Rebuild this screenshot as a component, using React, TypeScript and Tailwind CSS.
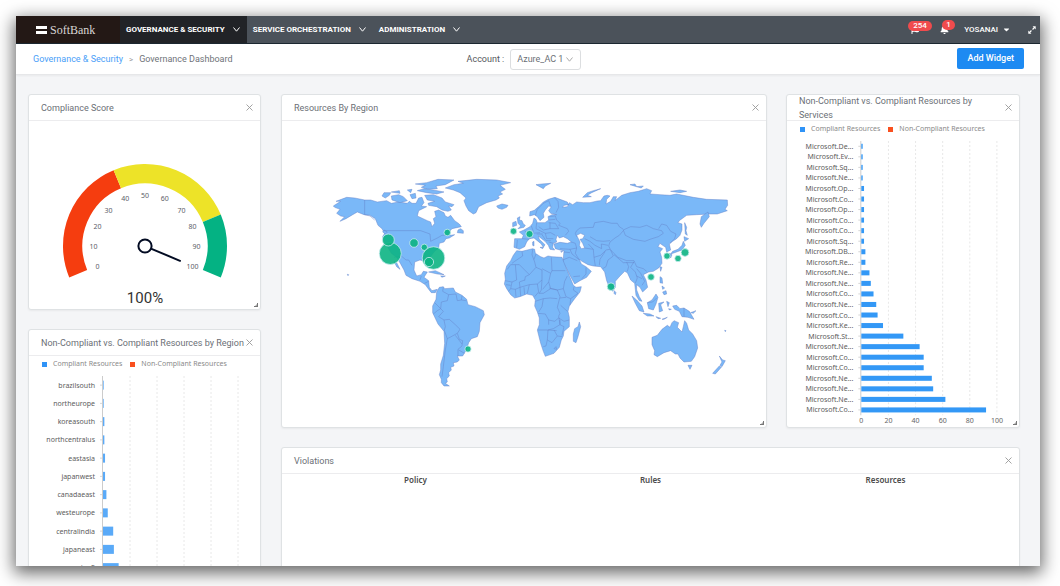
import type { ReactNode } from "react";
import { FaBell, FaCaretDown, FaFlag } from "react-icons/fa";

type Bar = { label: string; value: number };

const MENU = ["GOVERNANCE & SECURITY", "SERVICE ORCHESTRATION", "ADMINISTRATION"];

const REGIONS: Bar[] = [
  { label: "brazilsouth", value: 1 },
  { label: "northeurope", value: 1 },
  { label: "koreasouth", value: 2 },
  { label: "northcentralus", value: 2 },
  { label: "eastasia", value: 3 },
  { label: "japanwest", value: 3 },
  { label: "canadaeast", value: 5 },
  { label: "westeurope", value: 7 },
  { label: "centralindia", value: 15 },
  { label: "japaneast", value: 16 },
  { label: "eastus2", value: 23 },
];

const SERVICES: Bar[] = [
  { label: "Microsoft.De...", value: 1 },
  { label: "Microsoft.Ev...", value: 1 },
  { label: "Microsoft.Sq...", value: 1 },
  { label: "Microsoft.Ne...", value: 1 },
  { label: "Microsoft.Op...", value: 2 },
  { label: "Microsoft.Co...", value: 2 },
  { label: "Microsoft.Op...", value: 2 },
  { label: "Microsoft.Co...", value: 2 },
  { label: "Microsoft.Co...", value: 2 },
  { label: "Microsoft.Sq...", value: 2 },
  { label: "Microsoft.DB...", value: 3 },
  { label: "Microsoft.Re...", value: 3 },
  { label: "Microsoft.Ne...", value: 6 },
  { label: "Microsoft.Ne...", value: 7 },
  { label: "Microsoft.Co...", value: 9 },
  { label: "Microsoft.Ne...", value: 11 },
  { label: "Microsoft.Co...", value: 12 },
  { label: "Microsoft.Ke...", value: 16 },
  { label: "Microsoft.St...", value: 31 },
  { label: "Microsoft.Ne...", value: 43 },
  { label: "Microsoft.Co...", value: 46 },
  { label: "Microsoft.Co...", value: 46 },
  { label: "Microsoft.Ne...", value: 52 },
  { label: "Microsoft.Ne...", value: 53 },
  { label: "Microsoft.Ne...", value: 62 },
  { label: "Microsoft.Co...", value: 92 },
];

// x, y, radius
const BUBBLES = [
  [390.3, 253.5, 11],
  [388.3, 240, 6],
  [414, 243, 4.3],
  [424.3, 247.3, 3.2],
  [433.5, 258, 11.3],
  [429, 262, 4.6],
  [447.3, 232.5, 3.3],
  [513.5, 231.2, 3.2],
  [529.5, 234, 3.6],
  [468, 349, 3.1],
  [611, 286.7, 3.8],
  [651, 277, 3.3],
  [667, 256, 3.2],
  [678, 258.5, 3.2],
  [685, 252.5, 3.9],
];

const NORTH_AMERICA = [
  "M40,108 L62,94 L48,94 L80,82 L104,84 L134,90 L152,90 L172,96 L200,92 L214,100 L236,96 L262,100 L268,94 L276,100 L288,100 L296,84 L306,82 L312,98 L304,108 L320,110 L296,122 L292,138 L322,152 L332,156 L336,170 L344,160 L340,146 L348,140 L344,124 L356,120 L372,128 L376,138 L384,142 L392,136 L404,152 L418,162 L424,170 L396,176 L384,190 L392,196 L404,194 L388,204 L378,206 L372,216 L358,220 L356,234 L344,244 L330,262 L336,284 L330,292 L322,276 L300,270 L284,276 L282,300 L290,318 L304,314 L310,304 L322,306 L312,322 L326,332 L328,352 L336,362 L352,358 L346,368 L334,368 L326,358 L316,344 L300,334 L276,326 L258,316 L252,300 L242,282 L230,262 L214,250 L194,216 L188,200 L194,190 L186,176 L174,166 L166,146 L150,136 L132,134 L112,126 L98,134 L78,146 L60,154 L74,140 L62,138 L50,130 L60,118 L44,112Z",
  "M222,274 L230,278 L240,298 L230,290Z",
  "M192,180 L202,186 L196,192 L188,186Z",
  "M414,180 L422,176 L430,182 L430,190 L412,188Z",
  "M314,76 L340,74 L366,84 L376,96 L402,104 L396,110 L386,108 L394,120 L384,124 L366,120 L350,110 L326,106 L324,100 L344,94 L322,90Z",
  "M214,78 L236,74 L250,80 L262,92 L240,98 L216,90Z",
  "M186,78 L192,68 L212,68 L208,76 L196,84Z",
  "M286,42 L320,38 L354,28 L402,30 L376,44 L348,48 L352,56 L322,58 L304,52 L316,46Z",
  "M292,62 L312,56 L340,60 L372,66 L350,72 L320,68Z",
  "M214,66 L238,62 L240,70Z",
  "M262,60 L276,58 L272,68Z",
  "M270,74 L286,70 L288,84 L276,86Z",
  "M376,54 L402,44 L430,40 L414,34 L470,28 L530,30 L572,38 L540,46 L556,58 L540,66 L548,72 L534,78 L538,84 L528,90 L500,98 L476,110 L468,128 L460,132 L446,122 L438,108 L432,92 L438,84 L420,68 L400,60Z",
  "M530,108 L546,102 L564,106 L560,112 L546,118 L534,114Z",
  "M326,306 L346,302 L372,314 L352,312Z",
  "M362,318 L376,318 L366,322Z",
  "M82,313 L86,314 L84,317Z",
];

const NORTH_AMERICA_BORDERS =
  "M134,90 V134 L150,138 L164,150 M192,182 H302 L330,192 L332,214 L352,204 L366,196 L380,196 M222,262 L244,258 L258,270 L266,270 L276,286 M300,330 L304,318 M314,340 L326,334";

const SOUTH_AMERICA = [
  "M118,52 L130,50 L134,56 L160,54 L166,66 L186,76 L200,88 L204,104 L226,110 L250,122 L253,134 L240,158 L238,184 L232,200 L214,206 L206,218 L200,238 L188,258 L172,258 L178,270 L172,276 L160,278 L162,288 L152,292 L154,300 L146,308 L148,318 L140,326 L142,336 L136,340 L148,348 L132,348 L124,338 L124,328 L118,314 L122,300 L122,282 L130,256 L134,220 L132,184 L114,162 L98,128 L98,108 L108,88 L110,66Z",
];

const SOUTH_AMERICA_BORDERS =
  "M130,52 L128,64 L146,74 L142,92 L124,96 L122,116 M146,74 L168,72 L172,92 L184,90 L198,92 M186,78 L184,90 M104,98 L122,116 L112,122 L100,132 M122,116 L130,124 L116,140 L132,150 L136,170 L132,184 M132,150 L148,148 L166,164 L180,178 L172,190 L150,202 L142,206 L134,184 M142,206 L136,240 L130,290 L126,320 M172,190 L178,208 L188,212 L186,228 L174,238 L174,258 M166,196 L186,222 M176,240 L194,250";

const EURASIA = [
  "M149,138 L150,125 L163,121 L178,108 L190,96 L205,88 L225,82 L240,88 L262,96 L266,104 L252,106 L248,112 L262,110 L268,98 L278,104 L290,96 L310,98 L330,98 L352,93 L362,92 L372,78 L382,76 L390,78 L380,88 L378,102 L392,94 L400,80 L410,80 L405,92 L425,76 L450,68 L475,64 L500,56 L515,62 L510,72 L540,74 L570,76 L590,72 L640,82 L680,88 L742,90 L743,106 L735,118 L742,122 L712,132 L690,132 L650,134 L620,136 L598,152 L594,158 L606,162 L606,180 L600,196 L590,206 L578,214 L568,222 L572,240 L560,246 L557,232 L548,226 L540,220 L534,230 L548,236 L540,246 L545,262 L546,280 L536,294 L520,304 L506,306 L490,314 L498,330 L503,352 L488,366 L480,352 L470,344 L470,360 L478,380 L486,394 L478,392 L468,376 L466,358 L464,340 L452,330 L442,308 L434,304 L420,318 L406,334 L406,352 L398,364 L388,352 L380,332 L374,306 L362,290 L340,288 L324,284 L306,274 L298,268 L304,282 L318,290 L334,304 L320,322 L300,332 L284,342 L272,320 L258,292 L248,278 L250,264 L252,242 L240,240 L226,236 L222,222 L240,217 L262,220 L274,216 L262,206 L250,200 L238,204 L232,196 L228,208 L230,216 L220,220 L218,232 L224,240 L210,238 L205,226 L195,214 L185,206 L175,198 L178,208 L195,224 L190,232 L184,222 L172,212 L162,204 L148,206 L140,216 L134,230 L118,238 L102,232 L104,206 L126,206 L130,196 L118,186 L132,180 L150,170 L158,160 L162,144 L168,148 L172,158 L195,158 L206,150 L204,140 L216,134 L230,134 L212,130 L206,122 L214,110 L206,108 L196,120 L190,130 L192,142 L180,152 L172,140 L163,134Z",
  "M664,140 L684,126 L688,140 L672,160 L664,172 L660,162Z",
  "M112,144 L120,140 L118,150 L126,152 L130,162 L136,166 L132,172 L114,176 L122,168 L114,160Z",
  "M98,158 L108,154 L110,166 L98,170Z",
  "M168,44 L185,42 L212,40 L196,48 L190,56Z",
  "M308,82 L322,68 L340,62 L362,56 L335,68 L322,76 L334,80Z",
  "M450,44 L465,42 L470,50Z",
  "M470,50 L490,48 L484,54Z",
  "M572,64 L600,60 L620,64 L600,68Z",
  "M614,158 L620,172 L618,182 L622,196 L616,192Z",
  "M612,200 L626,206 L614,214Z",
  "M610,214 L616,226 L606,240 L584,248 L572,252 L578,244 L594,238 L606,226Z",
  "M568,250 L576,254 L572,264Z",
  "M540,290 L546,292 L542,304Z",
  "M180,232 L190,232 L188,236Z",
  "M158,216 L162,214 L162,228 L158,226Z",
  "M242,245 L248,243 L245,247Z",
  "M403,362 L408,368 L406,374 L402,370Z",
];

const CASPIAN = "M290,196 L302,190 L314,196 L308,206 L300,208 L308,220 L314,234 L304,236 L298,226 L300,216Z";

const EURASIA_BORDERS =
  "M290,182 L300,174 L340,172 L344,158 L370,154 L395,160 L412,160 L418,170 L430,178 M430,180 L452,170 L480,172 L500,166 L520,176 L545,182 L550,190 L535,200 L510,208 L495,214 L460,208 L436,196Z M536,176 L545,162 L560,166 L572,184 L588,192 L584,206 L570,220 M430,182 L418,196 L405,204 L390,216 L386,228 L392,240 L404,252 L414,262 L440,272 L462,272 L470,290 L490,296 L500,304 M392,240 L400,258 L384,270 L378,290 L368,296 M402,254 L430,278 L462,278 M440,276 L446,290 L442,304 M462,275 L452,292 L466,306 L472,324 L466,340 M470,296 L482,310 L494,334 L486,346 M470,318 L486,326 M290,234 L286,250 L298,270 M314,234 L340,238 L342,262 L346,288 M342,262 L362,256 L378,240 L390,238 M376,244 L360,268 L358,286 M290,200 L286,190 L290,182 M314,206 L330,214 L345,226 L365,236 M330,200 L350,212 L370,214 L390,212 M340,238 L325,222 M365,236 L364,222 L384,226 M274,216 L286,220 L290,234 L270,238 L240,236 M270,238 L276,252 L296,268 M252,246 L270,248 M248,270 L268,262 L292,272 M306,326 L318,312 L318,292 M280,320 L300,318 M166,136 L172,118 L190,100 L206,92 L212,108 M224,84 L234,94 L236,112 L228,128 M208,140 L226,138 L230,150 L240,160 L236,166 L262,176 L266,184 L256,196 M206,150 L226,148 M210,158 L210,176 L190,180 M170,158 L168,176 L180,182 M154,168 L160,184 L156,190 L180,188 M180,182 L196,190 L212,188 L226,196 M196,190 L200,206 L220,206 M186,194 L198,212 L212,212 M210,176 L236,176 L226,160 L206,158 M112,210 L110,234 M134,182 L150,196 L150,206 M126,206 L148,208 M206,216 L220,220 M176,170 L190,180 M170,192 L188,192";

const AFRICA = [
  "M110,62 L126,64 L158,56 L164,58 L166,70 L182,80 L192,84 L204,78 L216,80 L246,82 L252,98 L260,118 L270,142 L280,166 L288,172 L304,170 L300,186 L284,206 L268,228 L264,244 L268,262 L268,290 L252,304 L250,318 L244,330 L238,352 L222,370 L196,379 L190,364 L182,340 L172,300 L178,284 L178,264 L172,246 L164,228 L166,210 L158,196 L140,192 L120,200 L104,204 L92,194 L80,176 L73,162 L76,148 L74,130 L80,108 L92,92 L100,76Z",
  "M298,276 L302,290 L294,320 L288,338 L280,334 L280,312 L284,296 L294,290Z",
];

const AFRICA_BORDERS =
  "M126,64 L128,78 L104,94 L96,100 M82,118 L92,104 L106,104 L118,104 L134,120 L148,134 M106,104 L110,150 L96,156 L76,152 M158,58 L156,74 L164,96 L168,112 L148,134 L136,140 L134,152 M168,72 L162,88 M168,112 L186,120 L186,150 L172,162 L148,164 M186,116 L212,130 L216,122 L256,122 M214,82 L216,122 M148,164 L142,190 M172,162 L176,186 L164,200 M186,150 L184,180 L178,190 M212,130 L206,156 L188,178 M206,156 L212,176 L190,190 L176,190 M212,176 L232,180 L250,176 L254,154 L262,138 M232,180 L208,174 M250,176 L258,200 L272,206 L294,190 L280,180 L282,170 M272,206 L270,226 M232,180 L240,200 L236,216 L232,232 L240,250 L236,258 M240,204 L258,202 M242,226 L262,244 M166,214 L190,206 L210,204 L232,206 M190,206 L186,230 L176,246 M174,250 L196,252 L206,270 L206,284 M174,300 L204,300 L230,302 M206,270 L224,274 L236,264 L252,274 L268,270 M236,258 L240,284 L220,296 L204,300 M240,284 L240,270 M204,300 L202,330 L198,348 L190,350 M202,330 L216,338 L232,318 L222,300 M232,318 L246,320 M240,284 L252,290 L246,316 M96,156 L92,176 L106,178 L108,200 M92,176 L86,184 M106,178 L120,172 L122,198 M132,172 L134,194 M120,172 L134,168 L148,164 M120,172 L118,156 L134,150 M78,164 L92,166 M222,356 L228,350 L230,358Z";

const OCEANIA = [
  "M276,262 L292,256 L306,238 L322,226 L330,232 L336,218 L342,212 L356,218 L352,232 L366,246 L370,230 L374,212 L380,220 L386,240 L398,252 L410,272 L413,294 L404,320 L394,334 L372,336 L360,324 L354,312 L346,312 L332,302 L312,308 L292,320 L282,314 L284,302 L276,284Z",
  "M384,346 L396,346 L390,358Z",
  "M478,318 L488,330 L496,332 L486,350 L480,346 L486,336Z",
  "M478,348 L484,352 L466,372 L458,370Z",
  "M338,168 L350,166 L360,176 L372,174 L388,184 L402,208 L384,202 L366,200 L358,184 L344,178Z",
  "M392,188 L408,182 L400,190Z",
  "M262,158 L276,150 L288,132 L294,142 L288,162 L280,180 L266,176Z",
  "M216,138 L230,150 L246,168 L252,186 L238,182 L226,160Z",
  "M250,190 L270,192 L282,198 L262,198Z",
  "M288,200 L302,205 L294,206Z",
  "M306,208 L322,202 L312,208Z",
  "M296,160 L312,156 L302,164 L308,182 L298,186Z",
  "M320,154 L328,158 L324,170Z",
  "M300,80 L306,84 L308,100 L300,98Z",
  "M308,126 L318,122 L320,132 L312,134Z",
  "M306,108 L314,114 L308,118Z",
  "M326,176 L334,178 L328,180Z",
  "M494,241 L498,242 L496,245Z",
];

function Chevron() {
  return (
    <svg viewBox="0 0 7 5" className="h-[5px] w-[7px]" aria-hidden="true">
      <path d="M0.5,0.5 L3.5,4.2 L6.5,0.5" fill="none" stroke="currentColor" strokeWidth="1" />
    </svg>
  );
}

function Landmass({ x, y, shapes, borders }: { x: number; y: number; shapes: string[]; borders: string }) {
  return (
    <g transform={`translate(${x} ${y}) scale(0.3333)`}>
      {shapes.map((d) => (
        <path key={d} d={d} fill="#7ab8f8" />
      ))}
      <path d={borders} fill="none" />
    </g>
  );
}

function WorldMap() {
  return (
    <svg viewBox="282 121 484 306" className="block w-full" role="img" aria-label="Resources By Region">
      <g stroke="#6480c8" strokeWidth="1.6" strokeLinejoin="round" strokeOpacity="0.85">
        <Landmass x={320} y={170} shapes={NORTH_AMERICA} borders={NORTH_AMERICA_BORDERS} />
        <Landmass x={400} y={270} shapes={SOUTH_AMERICA} borders={SOUTH_AMERICA_BORDERS} />
        <Landmass x={480} y={170} shapes={EURASIA} borders={EURASIA_BORDERS} />
        <path d={CASPIAN} transform="translate(480 170) scale(0.3333)" fill="#fff" />
        <Landmass x={480} y={230} shapes={AFRICA} borders={AFRICA_BORDERS} />
        <Landmass x={560} y={250} shapes={OCEANIA} borders="M372,174 V200 M262,158 L278,156 L290,144" />
      </g>
      {BUBBLES.map(([cx, cy, r]) => (
        <circle key={`${cx}-${cy}`} cx={cx} cy={cy} r={r} fill="#0cb483" fillOpacity="0.9" stroke="#c9ecf0" strokeWidth="0.8" />
      ))}
    </svg>
  );
}

const polar = (value: number, r: number) => {
  const a = ((202.5 - value * 2.25) * Math.PI) / 180;
  return [116 + r * Math.cos(a), 125 - r * Math.sin(a)];
};

const arc = (from: number, to: number) => {
  const [x1, y1] = polar(from, 72.3);
  const [x2, y2] = polar(to, 72.3);
  return `M${x1},${y1} A72.3,72.3 0 0 1 ${x2},${y2}`;
};

function Gauge() {
  const ticks = [0, 10, 20, 30, 40, 50, 60, 70, 80, 90, 100];
  return (
    <svg viewBox="0 0 231 188" className="block w-full font-['Noto_Sans',sans-serif]" role="img" aria-label="Compliance Score">
      <g fill="none" strokeWidth="19.4">
        <path d={arc(0, 40)} stroke="#f53d0f" />
        <path d={arc(40, 80)} stroke="#ede328" />
        <path d={arc(80, 100)} stroke="#04b283" />
      </g>
      {ticks.map((t) => {
        const [x, y] = polar(t, 51.5);
        return (
          <text key={t} x={x} y={y + 3} textAnchor="middle" fontSize="7" fill="#5c6068">
            {t}
          </text>
        );
      })}
      <circle cx="116" cy="125" r="6.6" fill="none" stroke="#020b22" strokeWidth="2" />
      <path d="M122.5,127.8 L151,139.8" stroke="#020b22" strokeWidth="2" strokeLinecap="round" />
      <text x="116" y="182" textAnchor="middle" fontSize="15" fill="#333" fontFamily="Roboto, sans-serif">
        100%
      </text>
    </svg>
  );
}

type ChartProps = {
  name: string;
  data: Bar[];
  step: number;
  barHeight: number;
  unit: number;
  color: string;
  showScale?: boolean;
};

function BarChart({ name, data, step, barHeight, unit, color, showScale }: ChartProps) {
  const left = 74;
  const bottom = 4 + data.length * step;
  return (
    <svg
      viewBox={`0 0 231 ${Math.round(bottom + 12)}`}
      className="block w-full font-['Noto_Sans',sans-serif]"
      role="img"
      aria-label={name}
    >
      {[1, 2, 3, 4, 5].map((i) => (
        <path key={i} d={`M${left + i * 27},4 V${bottom}`} stroke="#e8e8e8" strokeWidth="1" strokeDasharray="2 2" />
      ))}
      <path d={`M${left - 0.5},4 V${bottom}`} stroke="#ccc" strokeWidth="1" />
      {data.map((bar, i) => {
        const y = 4 + step * (i + 0.5);
        return (
          <g key={i}>
            <path d={`M${left - 3},${y} H${left}`} stroke="#ccc" strokeWidth="0.8" />
            <rect x={left} y={y - barHeight / 2} width={bar.value * unit} height={barHeight} fill={color} />
            <text x={left - 8} y={y + 2.5} textAnchor="end" fontSize="7" fill="#5c5c5c">
              {bar.label}
            </text>
          </g>
        );
      })}
      {showScale &&
        [0, 20, 40, 60, 80, 100].map((v, i) => (
          <text key={v} x={left + i * 27} y={bottom + 8} textAnchor="middle" fontSize="7" fill="#666">
            {v}
          </text>
        ))}
    </svg>
  );
}

function Legend() {
  return (
    <ul className="flex h-4 items-center gap-2 pl-[13px] font-['Noto_Sans',sans-serif] text-[7px] whitespace-nowrap text-[#8a8a8a]">
      <li className="flex items-center gap-[6px]">
        <span className="size-[5px] bg-[#2f93f7]" />
        Compliant Resources
      </li>
      <li className="flex items-center gap-[6px]">
        <span className="size-[5px] bg-[#f9501f]" />
        Non-Compliant Resources
      </li>
    </ul>
  );
}

function Card({ title, children, resizable }: { title: string; children: ReactNode; resizable?: boolean }) {
  return (
    <section className="relative flex flex-col rounded-[3px] border border-[#dfe2e4] bg-white shadow-xs">
      <header className="flex h-[26px] shrink-0 items-center justify-between border-b border-[#ececee] pr-[7px] pl-3">
        <h2 className="min-w-0 flex-1 text-[9px] leading-[14px] text-[#6b6f76]">{title}</h2>
        <button type="button" aria-label={`Close ${title}`} className="shrink-0 text-[#999]">
          <svg viewBox="0 0 7 7" className="size-[7px]" aria-hidden="true">
            <path d="M0.5,0.5 L6.5,6.5 M6.5,0.5 L0.5,6.5" stroke="currentColor" strokeWidth="0.9" />
          </svg>
        </button>
      </header>
      {children}
      {resizable && (
        <svg viewBox="0 0 4 4" className="absolute right-[2px] bottom-[2px] size-1" aria-hidden="true">
          <path d="M4,0 V4 H0 V3 H3 V0Z" fill="#777" />
          <path d="M1,3 L3,1 V3Z" fill="#aaa" />
        </svg>
      )}
    </section>
  );
}

function TopBar() {
  return (
    <header className="flex h-7 shrink-0 items-stretch border-b border-[#1b2730] bg-[#4b525a] text-white">
      <a href="#" className="flex w-[104px] items-center gap-[3px] bg-[#231815] pl-5">
        <svg viewBox="0 0 11 8" className="h-2 w-[11px]" aria-hidden="true">
          <path d="M0,0 H11 V3 H0Z M0,5 H11 V8 H0Z" fill="#fff" />
        </svg>
        <span className="font-['Liberation_Serif',serif] text-[12px] leading-none text-[#d8d5d4]">SoftBank</span>
      </a>
      <nav className="flex items-stretch text-[8px] font-bold">
        {MENU.map((item, i) => (
          <button
            key={item}
            type="button"
            className={`flex items-center gap-2 pr-[7px] pl-[6px] whitespace-nowrap ${i === 0 ? "bg-[#212327]" : ""}`}
          >
            {item}
            <Chevron />
          </button>
        ))}
      </nav>
      <div className="ml-auto flex items-center pr-1 text-[8px] font-medium">
        <button type="button" aria-label="Flags, 254" className="relative mr-[21px]">
          <FaFlag size={8} />
          <span className="absolute -top-[5px] -left-[3px] rounded-full bg-[#f04b4d] px-[5px] text-[8px] leading-[10px]">254</span>
        </button>
        <button type="button" aria-label="Notifications, 1" className="relative mr-[15px]">
          <FaBell size={9} />
          <span className="absolute -top-[5px] left-[2px] rounded-full bg-[#f04b4d] px-1 text-[8px] leading-[10px]">1</span>
        </button>
        <button type="button" className="mr-[17px] flex items-center gap-1">
          YOSANAI
          <FaCaretDown size={9} />
        </button>
        <button type="button" aria-label="Full screen">
          <svg viewBox="0 0 8 8" className="size-2" aria-hidden="true">
            <path d="M4.6,0.3 H7.7 V3.4 L6.6,2.3 L5,3.9 L4.1,3 L5.7,1.4Z M3.4,7.7 H0.3 V4.6 L1.4,5.7 L3,4.1 L3.9,5 L2.3,6.6Z" fill="#fff" />
          </svg>
        </button>
      </div>
    </header>
  );
}

function SubBar() {
  return (
    <div className="relative flex h-[31px] shrink-0 items-center border-b border-[#e6e7e9] bg-white pt-px text-[9px] shadow-xs">
      <nav aria-label="Breadcrumb" className="flex w-[44%] items-center gap-[6px] pt-px pl-[17px] whitespace-nowrap">
        <a href="#" className="text-[#4aa0f8]">
          Governance &amp; Security
        </a>
        <span className="text-[8px] text-[#999]">&gt;</span>
        <span className="text-[#6f7379]">Governance Dashboard</span>
      </nav>
      <label htmlFor="account" className="mr-[6px] text-[#55585d]">
        Account :
      </label>
      <div className="relative">
        <select
          id="account"
          className="block h-[21px] w-[71px] appearance-none rounded-[3px] border border-[#dcdee0] bg-white pl-[6px] text-[9px] text-[#6b6f76]"
        >
          <option>Azure_AC 1</option>
        </select>
        <span className="pointer-events-none absolute inset-y-0 right-[8px] flex items-center text-[#aaa]">
          <Chevron />
        </span>
      </div>
      <button type="button" className="mr-4 mb-[2px] ml-auto h-[21px] rounded-[2px] bg-[#1d8af2] px-[10px] text-[9px] font-medium text-white">
        Add Widget
      </button>
    </div>
  );
}

export default function App() {
  return (
    <div className="h-screen bg-white pt-4 pr-5 pb-5 pl-4 font-[Roboto,sans-serif]">
      <div className="flex h-full flex-col overflow-hidden bg-[#f4f5f7] shadow-[0_5px_16px_2px_rgba(0,0,0,0.6)]">
        <TopBar />
        <SubBar />
        <main className="grid grow grid-cols-[233fr_739fr] items-start gap-x-5 pt-[19px] pr-5 pl-3">
          <div className="flex flex-col gap-[19px]">
            <Card title="Compliance Score" resizable>
              <Gauge />
            </Card>
            <Card title="Non-Compliant vs. Compliant Resources by Region">
              <Legend />
              <BarChart
                name="Resources by Region"
                data={REGIONS}
                step={18.25}
                barHeight={9}
                unit={0.68}
                color="#5aaaf8"
              />
            </Card>
          </div>
          <div className="grid grid-cols-[486fr_234fr] gap-x-[19px] gap-y-[19px]">
            <Card title="Resources By Region" resizable>
              <WorldMap />
            </Card>
            <Card title="Non-Compliant vs. Compliant Resources by Services" resizable>
              <Legend />
              <BarChart
                name="Resources by Services"
                data={SERVICES}
                step={10.5}
                barHeight={5}
                unit={1.35}
                color="#3398f6"
                showScale
              />
            </Card>
            <div className="col-span-2">
              <Card title="Violations">
                <div className="px-4 pb-48">
                  <table className="w-full table-fixed font-['Noto_Sans',sans-serif] text-[8px] leading-3 text-[#4c4c4c]">
                    <thead>
                      <tr>
                        <th scope="col" className="font-semibold">Policy</th>
                        <th scope="col" className="font-semibold">Rules</th>
                        <th scope="col" className="font-semibold">Resources</th>
                      </tr>
                    </thead>
                  </table>
                </div>
              </Card>
            </div>
          </div>
        </main>
      </div>
    </div>
  );
}
